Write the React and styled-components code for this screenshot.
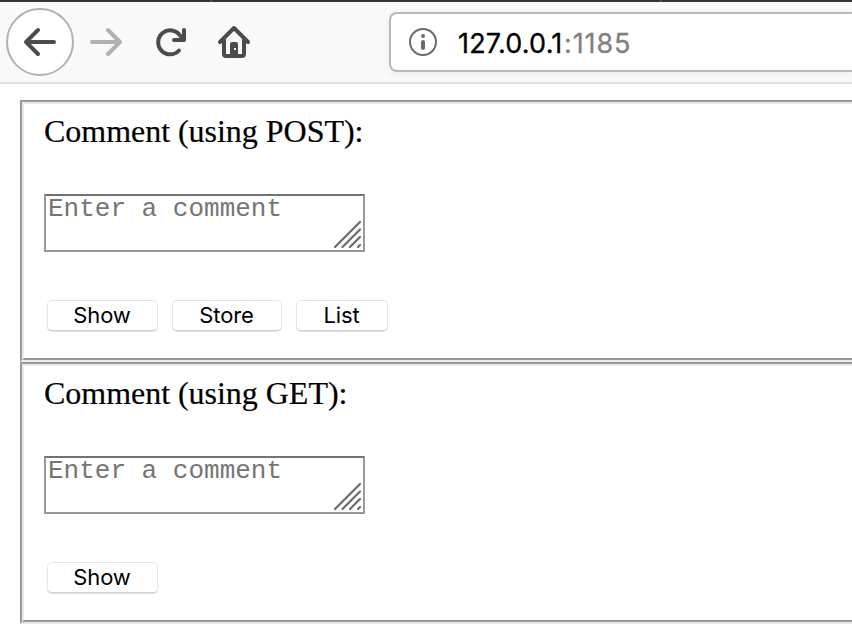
import React from "react";
import styled, { createGlobalStyle } from "styled-components";

const GlobalStyle = createGlobalStyle`
  * { box-sizing: border-box; }
  html, body { margin: 0; background: #fff; overflow: hidden; }
`;

const Window = styled.div`
  width: 852px;
  height: 644px;
  overflow: hidden;
  background: #fff;
`;

const TabStrip = styled.div`
  display: flex;
  gap: 448px;
  height: 2px;
  padding-left: 210px;
  background: #3a3234;
`;

const TabDivider = styled.span`
  width: 2px;
  height: 2px;
  background: #5d5759;
`;

const Toolbar = styled.header`
  display: flex;
  align-items: flex-start;
  height: 82px;
  border-bottom: 2px solid #dedede;
  background: #f9f9f9;
`;

const NavIcons = styled.nav`
  display: flex;
  width: 389px;
  height: 80px;
  flex: none;
`;

const NavButton = styled.button`
  width: ${(p) => p.$width}px;
  height: 80px;
  padding: 0;
  border: 0;
  background: none;
  svg { display: block; }
`;

const AddressBar = styled.div`
  display: flex;
  align-items: center;
  flex: 1;
  height: 60px;
  margin-top: 10px;
  padding-left: 18px;
  border: 2px solid #b9b9b9;
  border-right: 0;
  border-radius: 8px 0 0 8px;
  background: #fff;
  box-shadow: 0 2px 8px rgba(0, 0, 0, 0.06);
`;

const Url = styled.div`
  display: flex;
  margin-left: 21px;
  font: 27px/40px Inter, sans-serif;
  padding-top: 3px;
  white-space: nowrap;
`;

const Host = styled.span`
  width: 106px;
  letter-spacing: 0.2px;
  color: #000;
  -webkit-text-stroke: 0.3px currentColor;
`;

const Port = styled.span`
  letter-spacing: 0.9px;
  color: #808080;
  -webkit-text-stroke: 0.3px currentColor;
`;

const Page = styled.main`
  padding: 16px 0 0 20px;
`;

const Panel = styled.section`
  height: 262px;
  border: 2px solid #999;
  border-right: 0;
  border-bottom-color: #e9e9e9;
`;

const PanelInner = styled.div`
  display: flex;
  flex-direction: column;
  align-items: flex-start;
  height: 258px;
  padding: 9px 0 0 20px;
  border: 2px solid #e9e9e9;
  border-right: 0;
  border-bottom-color: #999;
`;

const Label = styled.label`
  height: 37px;
  font: 32px/37px "Liberation Serif", serif;
  letter-spacing: -0.03px;
  color: #000;
  -webkit-text-stroke: 0.2px currentColor;
`;

const CommentBox = styled.div`
  display: flex;
  justify-content: space-between;
  align-items: flex-end;
  width: 321px;
  height: 58px;
  margin-top: 44px;
  padding: 0 2px 2px;
  border: 2px solid #999;
  border-top-color: #737373;
`;

const Placeholder = styled.span`
  align-self: flex-start;
  font: 26px/26px "Liberation Mono", monospace;
  color: #757575;
`;

const Actions = styled.div`
  display: flex;
  gap: 14px;
  margin: 48px 0 0 3px;
`;

const ActionButton = styled.button`
  width: ${(p) => p.$width}px;
  height: 31px;
  padding: 0 1px 0 0;
  border: 1px solid #e6e6e6;
  border-bottom-color: #cfcfcf;
  border-radius: 5px;
  background: #fff;
  box-shadow: 0 1px 1px rgba(0, 0, 0, 0.12);
  font: 22px/27px Inter, sans-serif;
  letter-spacing: -0.15px;
  color: #000;
`;

function Grip() {
  return (
    <svg width="28" height="28" viewBox="0 0 28 28" fill="none" stroke="#6b6b6b" strokeWidth="2.2" strokeLinecap="round">
      <path d="M2 27 27 2M9.500 27 27 9.500M17 27l10-10M25 27l2-2" />
    </svg>
  );
}

function Comment({ method, actions }) {
  return (
    <Panel>
      <PanelInner>
        <Label>Comment (using {method}):</Label>
        <CommentBox>
          <Placeholder>Enter a comment</Placeholder>
          <Grip />
        </CommentBox>
        <Actions>
          {actions.map((a) => (
            <ActionButton key={a.label} $width={a.width}>{a.label}</ActionButton>
          ))}
        </Actions>
      </PanelInner>
    </Panel>
  );
}

const show = { label: "Show", width: 111 };
const store = { label: "Store", width: 110 };
const list = { label: "List", width: 92 };

export default function App() {
  return (
    <Window>
      <GlobalStyle />
      <TabStrip><TabDivider /><TabDivider /></TabStrip>
      <Toolbar>
        <NavIcons>
          <NavButton $width={80} aria-label="Back">
            <svg width="80" height="80" viewBox="0 2 80 80" fill="none" strokeLinecap="round" strokeLinejoin="round">
              <circle cx="40" cy="42" r="33" fill="#fff" stroke="#b1b1b1" strokeWidth="2" />
              <path d="M38 30 26 42l12 12M26 42h28" stroke="#4c4c4c" strokeWidth="4" />
            </svg>
          </NavButton>
          <NavButton $width={60} aria-label="Forward">
            <svg width="60" height="80" viewBox="80 2 60 80" fill="none" stroke="#b1b1b1" strokeWidth="4" strokeLinecap="round" strokeLinejoin="round">
              <path d="m108 30 12 12-12 12M120 42H92" />
            </svg>
          </NavButton>
          <NavButton $width={65} aria-label="Reload">
            <svg width="65" height="80" viewBox="140 2 65 80" fill="none" stroke="#4c4c4c" strokeWidth="4" strokeLinecap="round" strokeLinejoin="round">
              <path d="M179 50.500A12 12 0 1 1 180 35.400" />
              <path d="M184 30v10h-10" />
              <path d="m184 33-7 7h7z" fill="#4c4c4c" stroke="none" />
            </svg>
          </NavButton>
          <NavButton $width={65} aria-label="Home">
            <svg width="65" height="80" viewBox="205 2 65 80" fill="none" stroke="#4c4c4c" strokeWidth="4" strokeLinecap="round" strokeLinejoin="round">
              <path d="m220 42 14-14 14 14M224 40v14q0 2 2 2h16q2 0 2-2V40" />
              <path d="M230 56V44q0-2 2-2h4q2 0 2 2v12z" fill="#4c4c4c" stroke="none" />
              <path d="M234 48h2v2h-2z" fill="#f9f9f9" stroke="none" />
            </svg>
          </NavButton>
        </NavIcons>
        <AddressBar>
          <svg width="28" height="28" viewBox="0 0 28 28" fill="none" stroke="#6a6a6a">
            <circle cx="14" cy="14" r="13" strokeWidth="2" />
            <path d="M14 14v6M14 8v.01" strokeWidth="4" strokeLinecap="round" />
          </svg>
          <Url><Host>127.0.0.1</Host><Port>:1185</Port></Url>
        </AddressBar>
      </Toolbar>
      <Page>
        <Comment method="POST" actions={[show, store, list]} />
        <Comment method="GET" actions={[show]} />
      </Page>
    </Window>
  );
}
